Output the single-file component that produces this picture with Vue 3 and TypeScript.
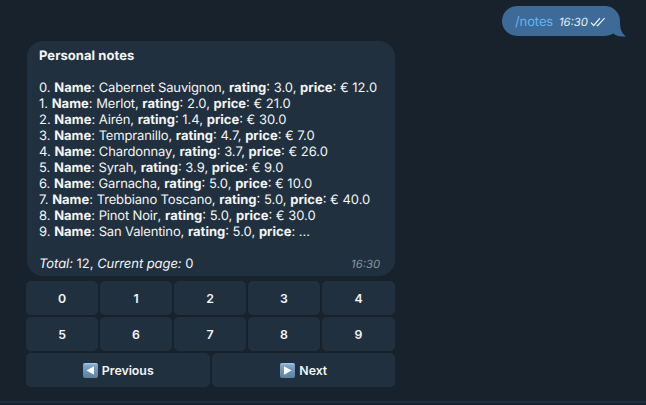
<script setup lang="ts">
interface Note {
  name: string
  rating: string
  price: string
}

const notes: Note[] = [
  { name: 'Cabernet Sauvignon', rating: '3.0', price: '€ 12.0' },
  { name: 'Merlot', rating: '2.0', price: '€ 21.0' },
  { name: 'Airén', rating: '1.4', price: '€ 30.0' },
  { name: 'Tempranillo', rating: '4.7', price: '€ 7.0' },
  { name: 'Chardonnay', rating: '3.7', price: '€ 26.0' },
  { name: 'Syrah', rating: '3.9', price: '€ 9.0' },
  { name: 'Garnacha', rating: '5.0', price: '€ 10.0' },
  { name: 'Trebbiano Toscano', rating: '5.0', price: '€ 40.0' },
  { name: 'Pinot Noir', rating: '5.0', price: '€ 30.0' },
  { name: 'San Valentino', rating: '5.0', price: '...' },
]

const digits: number[] = [0, 1, 2, 3, 4, 5, 6, 7, 8, 9]
</script>

<template>
  <main class="chat">
    <div class="outgoing">
      <div class="bubble">
        <span class="command">/notes</span>
        <span class="sent-time">16:30</span>
        <svg class="checks" viewBox="0 0 16 10" width="16" height="10">
          <path d="M1 5.6 3.7 8.5 10 1.2M6.6 8 7.6 8.7 14.6 1.2" />
        </svg>
      </div>
      <svg class="tail" viewBox="0 0 18 16" width="18" height="16">
        <path d="M12 0C12 7 13 12 18 15.2C12 16 8.5 15 6 13L0 8Z" />
      </svg>
    </div>

    <div class="incoming">
      <article class="message">
        <h1 class="title">Personal notes</h1>
        <ul class="notes">
          <li v-for="(note, i) in notes" :key="note.name">
            {{ i }}. <b>Name</b>: <span class="name">{{ note.name }}</span>, <b>rating</b>: {{ note.rating }}, <b>price</b>: {{ note.price }}
          </li>
        </ul>
        <footer class="summary">
          <span><i>Total:</i> 12, <i>Current page:</i> 0</span>
          <span class="time">16:30</span>
        </footer>
      </article>

      <div class="digits">
        <button v-for="d in digits" :key="d" class="key" type="button">{{ d }}</button>
      </div>
      <div class="pager">
        <button class="key" type="button">
          <svg class="arrow" viewBox="0 0 15 15" width="15" height="15">
            <defs>
              <linearGradient id="tile" x1="0" y1="0" x2="0" y2="1">
                <stop offset="0" stop-color="#a9cce8" />
                <stop offset="0.18" stop-color="#7ba3c9" />
                <stop offset="1" stop-color="#5d819f" />
              </linearGradient>
            </defs>
            <rect width="15" height="15" rx="2" fill="url(#tile)" />
            <path d="M11 3.3V11.7L3.5 7.5Z" fill="#fff" />
          </svg>
          Previous
        </button>
        <button class="key" type="button">
          <svg class="arrow" viewBox="0 0 15 15" width="15" height="15">
            <rect width="15" height="15" rx="2" fill="url(#tile)" />
            <path d="M4 3.3V11.7L11.5 7.5Z" fill="#fff" />
          </svg>
          Next
        </button>
      </div>
    </div>
    <div class="divider"></div>
  </main>
</template>

<style>
body {
  background: #18222c;
}
</style>

<style scoped>
.chat {
  box-sizing: border-box;
  width: 646px;
  height: 405px;
  padding-top: 6px;
  overflow: hidden;
  display: flex;
  flex-direction: column;
  background: #18222c;
  color: #f3f5f6;
  font-family: Inter, 'Liberation Sans', sans-serif;
  font-size: 13px;
  line-height: 16px;
  text-rendering: geometricPrecision;
}
.outgoing {
  position: relative;
  align-self: flex-end;
  margin-right: 26px;
}
.bubble {
  box-sizing: border-box;
  position: relative;
  z-index: 1;
  display: flex;
  align-items: center;
  width: 118px;
  height: 30px;
  padding-left: 13px;
  border-radius: 15px;
  background: #3d6a97;
}
.command {
  width: 44px;
  padding-top: 1px;
  letter-spacing: -0.1px;
  color: #64b5ef;
}
.sent-time {
  width: 31px;
  padding-top: 2px;
  font-size: 11.3px;
  font-style: italic;
  color: #e8f1f8;
}
.checks {
  margin-top: 2px;
  fill: none;
  stroke: #e8f1f8;
  stroke-width: 1.2;
}
.tail {
  position: absolute;
  right: -6px;
  bottom: -1px;
  fill: #3d6a97;
}
.incoming {
  width: 369px;
  margin: 5px 0 0 26px;
}
.message {
  box-sizing: border-box;
  height: 235px;
  margin-left: 1px;
  padding: 7px 15px 0 12px;
  border-radius: 16px;
  background: #21303f;
}
.title {
  margin: 0 0 16px;
  font-size: 13px;
  font-weight: 700;
  letter-spacing: 0.05px;
}
.notes {
  margin: 0 0 16px;
  padding: 0;
  list-style: none;
  white-space: nowrap;
}
.name {
  letter-spacing: -0.15px;
}
b {
  font-weight: 650;
}
.summary {
  display: flex;
  justify-content: space-between;
}
.summary i {
  letter-spacing: -0.06px;
}
.time {
  font-size: 11.3px;
  font-style: italic;
  color: #8796a5;
}
.digits {
  display: grid;
  grid-template-columns: repeat(4, 72px) 73px;
  grid-auto-rows: 34px;
  gap: 2px;
  margin-top: 5px;
}
.pager {
  display: grid;
  grid-template-columns: 183.5px 183.5px;
  grid-auto-rows: 34px;
  gap: 2px;
  margin-top: 2px;
}
.key {
  display: flex;
  align-items: center;
  justify-content: center;
  gap: 4px;
  padding: 0;
  border: 0;
  border-radius: 5px;
  background: #21303f;
  color: #f3f5f6;
  font-family: inherit;
  font-size: 12.3px;
  font-weight: 600;
}
.pager .key {
  padding-left: 1px;
}
.divider {
  height: 2px;
  margin-top: 14px;
  background: #202f3d;
}
</style>
